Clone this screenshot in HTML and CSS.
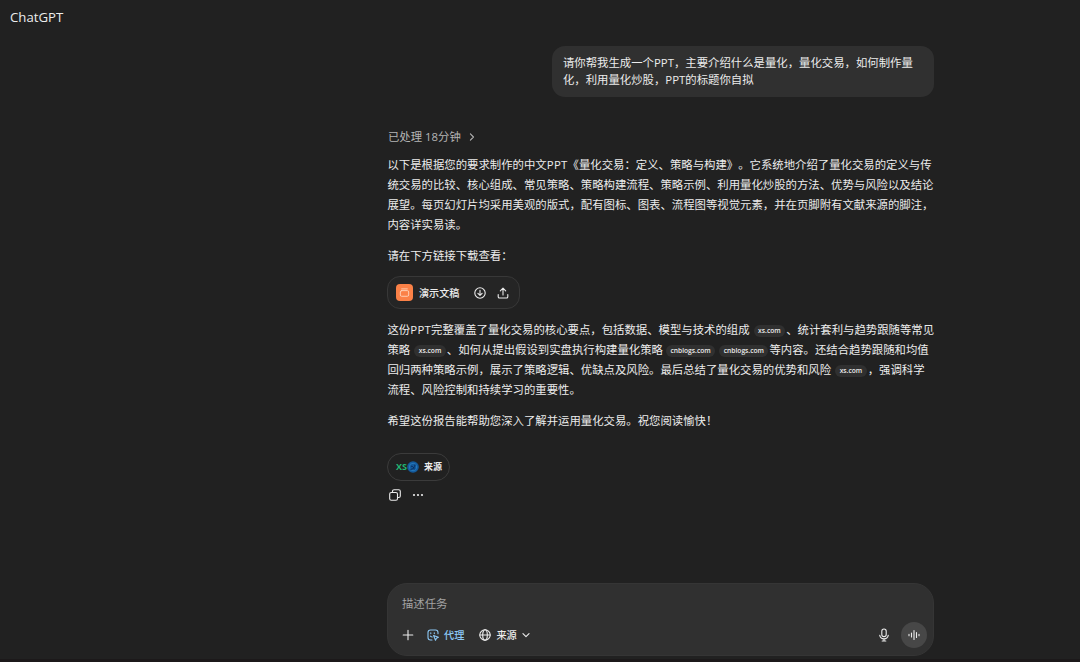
FILE: index.html
```
<!DOCTYPE html>
<html lang="zh-CN">
<head>
  <meta charset="UTF-8" />
  <meta name="viewport" content="width=device-width, initial-scale=1.0" />
  <title>ChatGPT</title>
  <link rel="stylesheet" href="styles.css">
</head>
<body>
  <header class="topbar">ChatGPT</header>

  <main class="thread">
    <div class="user-message">请你帮我生成一个PPT，主要介绍什么是量化，量化交易，如何制作量<br>化，利用量化炒股，PPT的标题你自拟</div>

    <div class="status">
      已处理 18分钟
      <svg class="chevron" viewBox="0 0 10 10"><path d="M3 1.2 6.8 5 3 8.8" /></svg>
    </div>

    <div class="answer">
      <p>以下是根据您的要求制作的中文<span class="latin">PPT</span>《量化交易：定义、策略与构建》。它系统地介绍了量化交易的定义与传<br>统交易的比较、核心组成、常见策略、策略构建流程、策略示例、利用量化炒股的方法、优势与风险以及结论<br>展望。每页幻灯片均采用美观的版式，配有图标、图表、流程图等视觉元素，并在页脚附有文献来源的脚注，<br>内容详实易读。</p>
      <p>请在下方链接下载查看：</p>

      <div class="file-card">
        <span class="file-icon">
          <svg viewBox="0 0 18 18"><path d="M6 5.2h6" /><rect x="4.6" y="7" width="8.8" height="6" rx="1.4" /></svg>
        </span>
        <span class="file-name">演示文稿</span>
        <svg class="icon download" viewBox="0 0 12 12"><circle cx="6" cy="6" r="5.2" /><path d="M6 3.2v5M3.9 6.3 6 8.4l2.1-2.1" /></svg>
        <svg class="icon share" viewBox="0 0 12 12"><path d="M6 8V1.2M3.3 3.8 6 1.1l2.7 2.7M1.2 7.6v2.1c0 .8.5 1.3 1.3 1.3h7c.8 0 1.3-.5 1.3-1.3V7.6" /></svg>
      </div>

      <p>这份<span class="latin">PPT</span>完整覆盖了量化交易的核心要点，包括数据、模型与技术的组成<span class="cite">xs.com</span>、统计套利与趋势跟随等常见<br>策略<span class="cite">xs.com</span>、如何从提出假设到实盘执行构建量化策略<span class="cite">cnblogs.com</span><span class="cite">cnblogs.com</span>等内容。还结合趋势跟随和均值<br>回归两种策略示例，展示了策略逻辑、优缺点及风险。最后总结了量化交易的优势和风险<span class="cite">xs.com</span>，强调科学<br>流程、风险控制和持续学习的重要性。</p>
      <p>希望这份报告能帮助您深入了解并运用量化交易。祝您阅读愉快！</p>
    </div>

    <div class="sources">
      <span class="xs-logo">XS</span>
      <svg class="blog-logo" viewBox="0 0 12 12"><circle cx="6" cy="6" r="5.8" fill="#145a9c" /><circle cx="6" cy="6" r="3.7" fill="none" stroke="#2a7dc0" stroke-width=".8" /><path d="M3.8 8.4c2.4-.4 3.8-1.8 4.2-4.4M4.4 5.2c1.5 0 2.5 1 2.7 2.7" fill="none" stroke="#0b2f60" stroke-width="1" /></svg>
      <span>来源</span>
    </div>

    <div class="actions">
      <svg class="icon" viewBox="0 0 12 12"><rect x=".7" y="3.5" width="7.8" height="7.8" rx="1.6" /><path d="M3.5 3.2V2.3c0-1 .6-1.6 1.6-1.6h4.6c1 0 1.6.6 1.6 1.6v4.6c0 1-.6 1.6-1.6 1.6h-.9" /></svg>
      <svg class="icon dots" viewBox="0 0 12 12"><circle cx="2" cy="6" r="1.1" /><circle cx="6" cy="6" r="1.1" /><circle cx="10" cy="6" r="1.1" /></svg>
    </div>
  </main>

  <footer class="composer">
    <div class="placeholder">描述任务</div>
    <div class="tools">
      <svg class="icon plus" viewBox="0 0 12 12"><path d="M6 1.2v9.6M1.2 6h9.6" /></svg>
      <span class="tool agent">
        <svg class="icon" viewBox="0 0 12 12"><path d="M5 11H3.5C1.9 11 1 10.1 1 8.5v-5C1 1.9 1.9 1 3.5 1h5C10.1 1 11 1.900 11 3.500v1.300M3.800 3.800v.8M7.300 3.800v.8M3.400 7.200c.6.600 1.100.8 1.800.8" /><path d="m6.600 6.600 4.800 1.700-2 .9-.9 2.100z" /></svg>
        代理
      </span>
      <span class="tool source">
        <svg class="icon" viewBox="0 0 12 12"><circle cx="6" cy="6" r="5.2" /><ellipse cx="6" cy="6" rx="2.3" ry="5.2" /><path d="M.8 6h10.4" /></svg>
        来源
        <svg class="chevron" viewBox="0 0 10 10"><path d="M1.2 3.2 5 7l3.8-3.8" /></svg>
      </span>
      <svg class="icon mic" viewBox="0 0 12 14"><rect x="3.8" y="1" width="4.4" height="7.6" rx="2.2" /><path d="M1.700 7.200c.4 2.300 2.100 3.700 4.300 3.700s3.900-1.400 4.300-3.700M6 11v2M4.200 13h3.600" /></svg>
      <span class="voice">
        <svg class="icon" viewBox="0 0 12 12"><path d="M1 5.3v1.4M3.5 4v4M6 1.5v9M8.5 3.5v5M11 5.3v1.400" /></svg>
      </span>
    </div>
  </footer>
</body>
</html>
```
FILE: styles.css
```
* {
  box-sizing: border-box;
}

body {
  margin: 0;
  height: 662px;
  overflow: hidden;
  display: flex;
  flex-direction: column;
  border-bottom: 3px solid #1c191a;
  background: #212121;
  color: #ececec;
  font-family: "Open Sans", "Noto Sans CJK SC", sans-serif;
  font-size: 11.39px;
  line-height: 20px;
  white-space: nowrap;
  text-spacing-trim: space-all;
}

svg {
  display: block;
  flex: none;
  fill: none;
  stroke: currentColor;
  stroke-linecap: round;
  stroke-linejoin: round;
}

.icon {
  width: 12px;
  height: 12px;
  stroke-width: 1.1;
}

.chevron {
  width: 8px;
  height: 8px;
  stroke-width: 1.4;
}

.topbar {
  height: 46px;
  padding: 7px 10px;
  font-size: 13.2px;
  font-weight: 500;
}

.thread {
  width: 547px;
  margin-left: 387px;
  flex: 1;
  display: flex;
  flex-direction: column;
  align-items: flex-start;
}

.user-message {
  align-self: flex-end;
  width: 382px;
  height: 51px;
  padding: 8px 11px;
  border-radius: 13px;
  background: #303030;
  line-height: 17px;
}

.status {
  display: flex;
  align-items: center;
  gap: 7px;
  margin: 30px 0 0 1px;
  color: #b4b4b4;
}

.answer {
  margin-top: 8px;
}

.answer p {
  margin: 0 0 11px 0.5px;
}

.latin {
  letter-spacing: 0.3px;
}

.file-card {
  display: flex;
  align-items: center;
  width: 133px;
  height: 33px;
  margin: -1px 0 11px;
  padding-left: 8px;
  border: 1px solid #383838;
  border-radius: 13px;
  background: #252525;
}

.file-icon {
  width: 17px;
  height: 17px;
  margin-right: 6px;
  border-radius: 4px;
  background: #fb8147;
  color: #ffd2b8;
}

.file-name {
  font-size: 10.1px;
  font-weight: 500;
}

.download {
  margin-left: 15px;
}

.share {
  margin-left: 11px;
}

.cite {
  display: inline-block;
  height: 12px;
  margin: 0 1px 0 4px;
  padding: 0 4.5px;
  border-radius: 6px;
  background: #303030;
  font-size: 6.7px;
  font-weight: 600;
  line-height: 12px;
  vertical-align: 1px;
}

.cite + .cite {
  margin-left: 3px;
}

.sources {
  display: flex;
  align-items: center;
  width: 63px;
  height: 28px;
  margin-top: 11px;
  padding-left: 8px;
  border: 1px solid #3b3b3b;
  border-radius: 14px;
  font-size: 9px;
  font-weight: 700;
}

.xs-logo {
  color: #21b573;
  font-size: 9px;
}

.blog-logo {
  width: 12px;
  height: 12px;
  margin-right: 5px;
  stroke: none;
}

.actions {
  display: flex;
  gap: 11px;
  margin: 8px 0 0 2px;
}

.dots {
  fill: currentColor;
  stroke: none;
}

.composer {
  width: 547px;
  height: 73px;
  margin: 0 0 3px 387px;
  padding: 10px 6px 0 14px;
  border: 1px solid #353535;
  border-radius: 20px;
  background: #303030;
}

.placeholder {
  height: 20px;
  line-height: 20px;
  color: #a3a3a3;
}

.tools {
  display: flex;
  align-items: center;
  height: 26px;
  margin-top: 8px;
  font-size: 10.2px;
  font-weight: 500;
}

.plus {
  margin-left: -0.5px;
}

.tool {
  display: flex;
  align-items: center;
  gap: 5px;
}

.agent {
  margin-left: 13.5px;
  color: #8cc8f5;
}

.source {
  margin-left: 15px;
}

.mic {
  height: 14px;
  margin-left: auto;
}

.voice {
  display: grid;
  place-items: center;
  width: 26px;
  height: 26px;
  margin-left: 11px;
  border-radius: 50%;
  background: #474747;
}
```
